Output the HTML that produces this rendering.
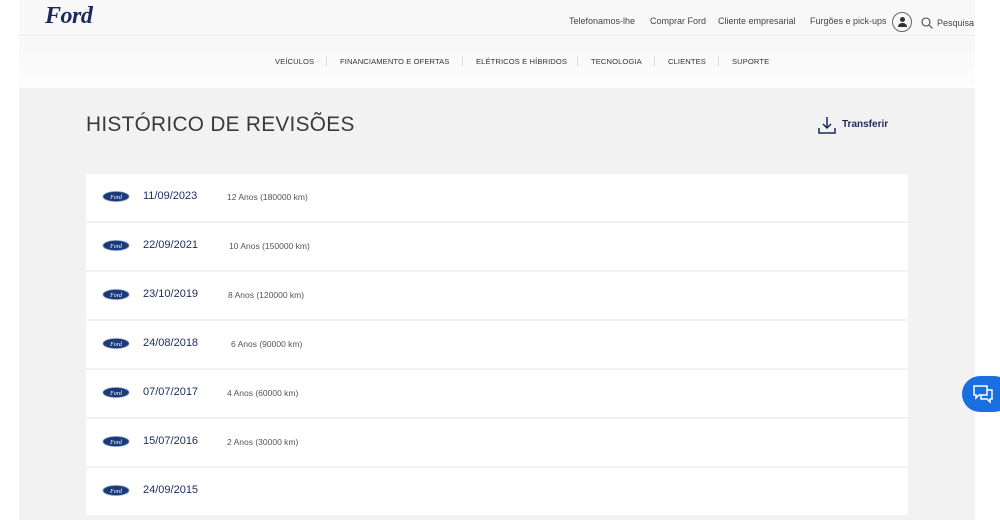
<!DOCTYPE html>
<html><head><meta charset="utf-8"><style>
*{margin:0;padding:0;box-sizing:border-box}
body{width:1000px;height:520px;overflow:hidden;background:#fff;font-family:"Liberation Sans",sans-serif;position:relative}
.top{position:absolute;left:19px;top:0;width:956px;height:36px;background:#f8f8f8;border-bottom:1px solid #ececec}
.nav{position:absolute;left:19px;top:37px;width:956px;height:51px;background:linear-gradient(#f7f7f7,#fdfdfd)}
.logo{position:absolute;left:45px;top:3px;font-family:"Liberation Serif",serif;font-style:italic;font-weight:bold;font-size:24px;color:#1b2a5c;letter-spacing:-0.5px}
.tl{position:absolute;top:16px;font-size:9px;color:#444}
.nl{position:absolute;top:57px;font-size:7.6px;color:#333;letter-spacing:.1px}
.sep{position:absolute;top:57px;width:1px;height:10px;background:#ddd}
.panel{position:absolute;left:19px;top:88px;width:956px;height:432px;background:#f2f2f2}
h1{position:absolute;left:86px;top:113px;font-weight:normal;font-size:20.8px;color:#3a3a3a;letter-spacing:.3px}
.tr{position:absolute;left:842px;top:119px;font-size:10px;font-weight:bold;color:#1b2a5c}
.row{position:absolute;left:86px;width:822px;height:47px;background:#fff}
.ov{position:absolute;left:16px;top:17px}
.d{position:absolute;left:57px;top:16px;font-size:11px;color:#1b2a5c}
.k{position:absolute;top:18px;font-size:8.5px;color:#555}
.chat{position:absolute;left:962px;top:376px;width:50px;height:36px;border-radius:18px;background:#1a6fe0}
</style></head><body>
<div class="top"></div>
<div class="logo">Ford</div>
<div class="tl" style="left:569px">Telefonamos-lhe</div>
<div class="tl" style="left:650px">Comprar Ford</div>
<div class="tl" style="left:718px">Cliente empresarial</div>
<div class="tl" style="left:810px">Furgões e pick-ups</div>
<div style="position:absolute;left:892px;top:12px;width:20px;height:20px;border:1px solid #666;border-radius:50%"><div style="position:absolute;left:7px;top:4px;width:5px;height:5px;border-radius:50%;background:#333"></div><div style="position:absolute;left:5px;top:10px;width:9px;height:4px;border-radius:4px 4px 0 0;background:#333"></div></div>
<svg style="position:absolute;left:921px;top:17px" width="12" height="12" viewBox="0 0 12 12"><circle cx="5" cy="5" r="4" fill="none" stroke="#444" stroke-width="1.1"/><path d="M8 8l3.5 3.5" stroke="#444" stroke-width="1.1"/></svg>
<div class="tl" style="left:937px;top:18px">Pesquisa</div>
<div class="nav"></div>
<div class="nl" style="left:275px">VEÍCULOS</div><div class="sep" style="left:326px"></div>
<div class="nl" style="left:340px">FINANCIAMENTO E OFERTAS</div><div class="sep" style="left:462px"></div>
<div class="nl" style="left:476px">ELÉTRICOS E HÍBRIDOS</div><div class="sep" style="left:577px"></div>
<div class="nl" style="left:591px">TECNOLOGIA</div><div class="sep" style="left:654px"></div>
<div class="nl" style="left:668px">CLIENTES</div><div class="sep" style="left:718px"></div>
<div class="nl" style="left:732px">SUPORTE</div>
<div class="panel"></div>
<h1>HISTÓRICO DE REVISÕES</h1>
<svg style="position:absolute;left:818px;top:116px" width="18" height="18" viewBox="0 0 18 18" fill="none" stroke="#1b2a5c" stroke-width="1.5"><path d="M9 1v11M5 8l4 4 4-4M1 12v5h16v-5"/></svg>
<div class="tr">Transferir</div>
<svg width="0" height="0" style="position:absolute"><defs><g id="o"><ellipse cx="14" cy="5.5" rx="13" ry="5" fill="#1b3a7a" stroke="#7d95c2" stroke-width="0.8"/><text x="14" y="8" font-size="6" font-style="italic" fill="#fff" text-anchor="middle" font-family="Liberation Serif">Ford</text></g></defs></svg>
<div class="row" style="top:174px"><svg class="ov" width="28" height="11"><use href="#o"/></svg><div class="d">11/09/2023</div><div class="k" style="left:141px">12 Anos (180000 km)</div></div>
<div class="row" style="top:223px"><svg class="ov" width="28" height="11"><use href="#o"/></svg><div class="d">22/09/2021</div><div class="k" style="left:143px">10 Anos (150000 km)</div></div>
<div class="row" style="top:272px"><svg class="ov" width="28" height="11"><use href="#o"/></svg><div class="d">23/10/2019</div><div class="k" style="left:142px">8 Anos (120000 km)</div></div>
<div class="row" style="top:321px"><svg class="ov" width="28" height="11"><use href="#o"/></svg><div class="d">24/08/2018</div><div class="k" style="left:145px">6 Anos (90000 km)</div></div>
<div class="row" style="top:370px"><svg class="ov" width="28" height="11"><use href="#o"/></svg><div class="d">07/07/2017</div><div class="k" style="left:141px">4 Anos (60000 km)</div></div>
<div class="row" style="top:419px"><svg class="ov" width="28" height="11"><use href="#o"/></svg><div class="d">15/07/2016</div><div class="k" style="left:141px">2 Anos (30000 km)</div></div>
<div class="row" style="top:468px"><svg class="ov" width="28" height="11"><use href="#o"/></svg><div class="d">24/09/2015</div></div>
<div class="chat"><svg style="position:absolute;left:10px;top:8px" width="22" height="20" viewBox="0 0 22 20" fill="none" stroke="#fff" stroke-width="1.5"><path d="M2 2h13v9H7l-3 3v-3H2z"/><path d="M15 6h5v9h-2v3l-3-3h-6v-4"/></svg></div>
</body></html>
